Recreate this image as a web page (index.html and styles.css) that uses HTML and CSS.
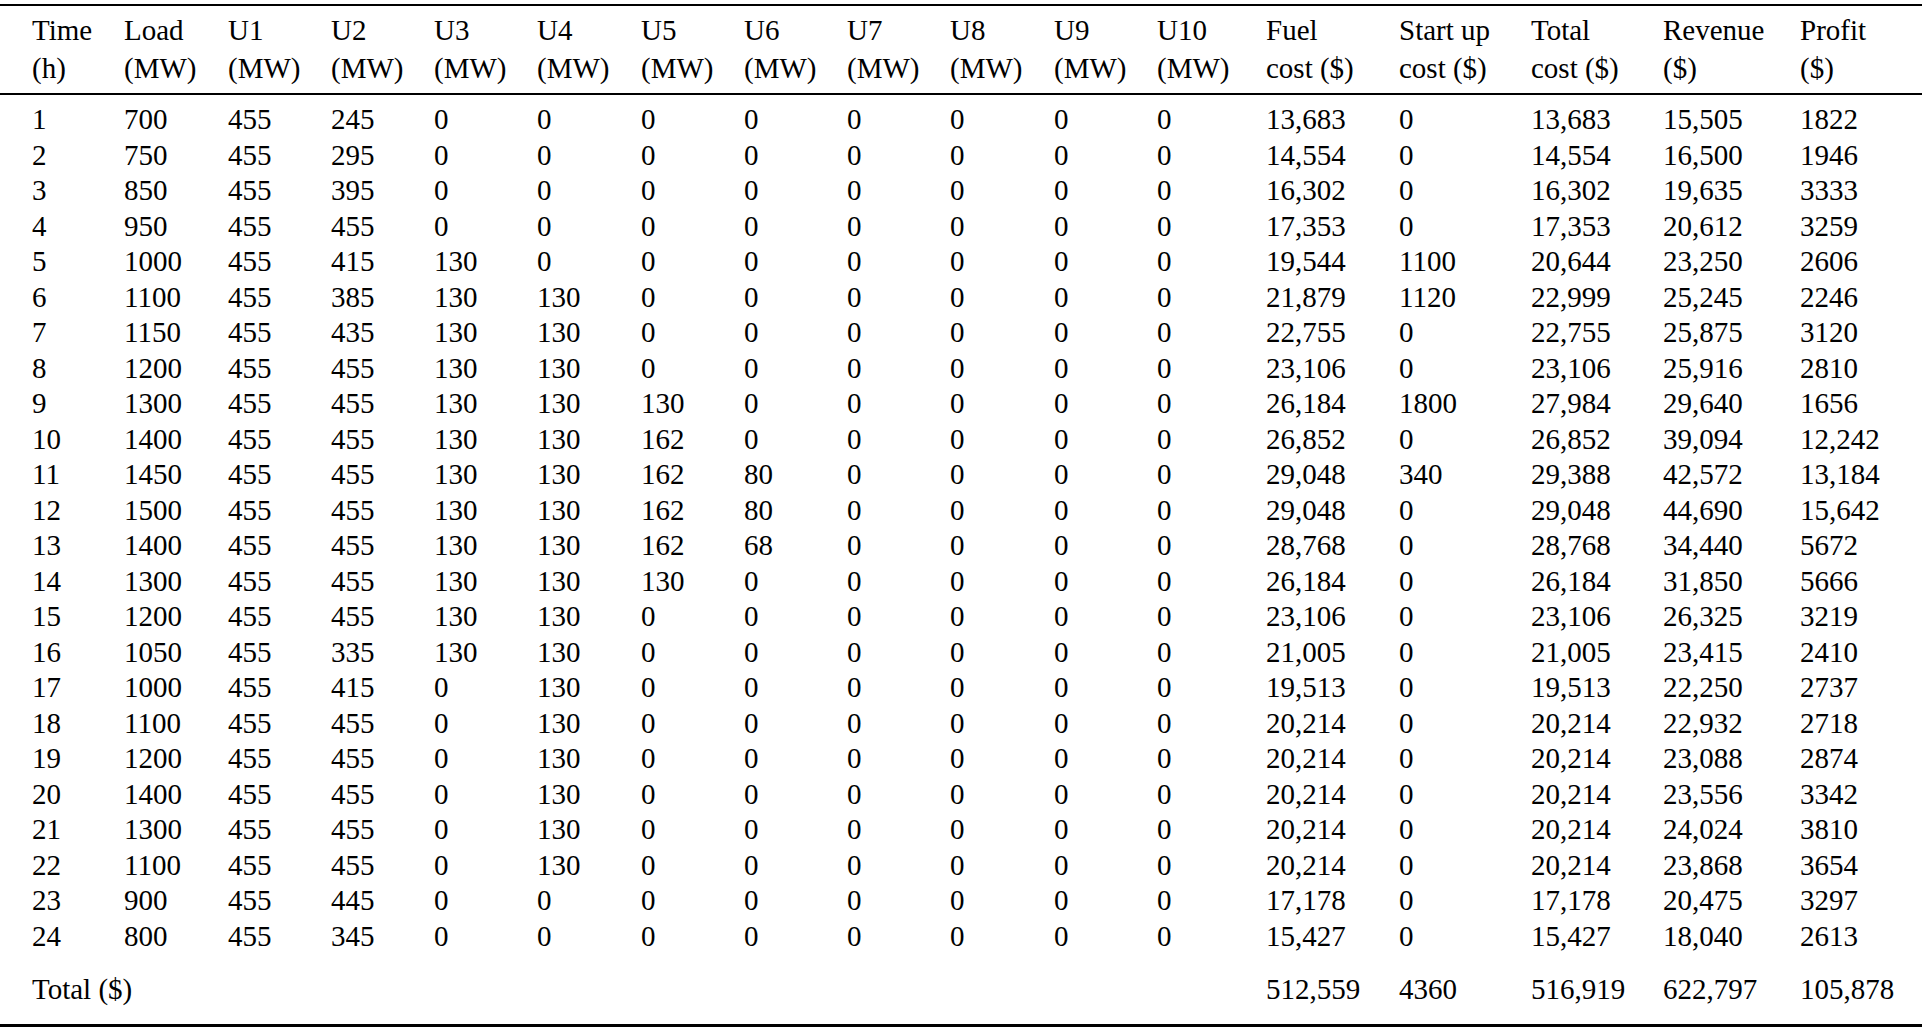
FILE: index.html
```html
<!DOCTYPE html>
<html lang="en">
<head>
<meta charset="utf-8">
<title>Unit commitment results</title>
<link rel="stylesheet" href="styles.css">
</head>
<body>
<div class="results">
  <div class="row head">
    <div class="cell">Time<br>(h)</div>
    <div class="cell">Load<br>(MW)</div>
    <div class="cell">U1<br>(MW)</div>
    <div class="cell">U2<br>(MW)</div>
    <div class="cell">U3<br>(MW)</div>
    <div class="cell">U4<br>(MW)</div>
    <div class="cell">U5<br>(MW)</div>
    <div class="cell">U6<br>(MW)</div>
    <div class="cell">U7<br>(MW)</div>
    <div class="cell">U8<br>(MW)</div>
    <div class="cell">U9<br>(MW)</div>
    <div class="cell">U10<br>(MW)</div>
    <div class="cell">Fuel<br>cost ($)</div>
    <div class="cell">Start up<br>cost ($)</div>
    <div class="cell">Total<br>cost ($)</div>
    <div class="cell">Revenue<br>($)</div>
    <div class="cell">Profit<br>($)</div>
  </div>
  <div class="body">
    <div class="row"><div class="cell">1</div><div class="cell">700</div><div class="cell">455</div><div class="cell">245</div><div class="cell">0</div><div class="cell">0</div><div class="cell">0</div><div class="cell">0</div><div class="cell">0</div><div class="cell">0</div><div class="cell">0</div><div class="cell">0</div><div class="cell">13,683</div><div class="cell">0</div><div class="cell">13,683</div><div class="cell">15,505</div><div class="cell">1822</div></div>
    <div class="row"><div class="cell">2</div><div class="cell">750</div><div class="cell">455</div><div class="cell">295</div><div class="cell">0</div><div class="cell">0</div><div class="cell">0</div><div class="cell">0</div><div class="cell">0</div><div class="cell">0</div><div class="cell">0</div><div class="cell">0</div><div class="cell">14,554</div><div class="cell">0</div><div class="cell">14,554</div><div class="cell">16,500</div><div class="cell">1946</div></div>
    <div class="row"><div class="cell">3</div><div class="cell">850</div><div class="cell">455</div><div class="cell">395</div><div class="cell">0</div><div class="cell">0</div><div class="cell">0</div><div class="cell">0</div><div class="cell">0</div><div class="cell">0</div><div class="cell">0</div><div class="cell">0</div><div class="cell">16,302</div><div class="cell">0</div><div class="cell">16,302</div><div class="cell">19,635</div><div class="cell">3333</div></div>
    <div class="row"><div class="cell">4</div><div class="cell">950</div><div class="cell">455</div><div class="cell">455</div><div class="cell">0</div><div class="cell">0</div><div class="cell">0</div><div class="cell">0</div><div class="cell">0</div><div class="cell">0</div><div class="cell">0</div><div class="cell">0</div><div class="cell">17,353</div><div class="cell">0</div><div class="cell">17,353</div><div class="cell">20,612</div><div class="cell">3259</div></div>
    <div class="row"><div class="cell">5</div><div class="cell">1000</div><div class="cell">455</div><div class="cell">415</div><div class="cell">130</div><div class="cell">0</div><div class="cell">0</div><div class="cell">0</div><div class="cell">0</div><div class="cell">0</div><div class="cell">0</div><div class="cell">0</div><div class="cell">19,544</div><div class="cell">1100</div><div class="cell">20,644</div><div class="cell">23,250</div><div class="cell">2606</div></div>
    <div class="row"><div class="cell">6</div><div class="cell">1100</div><div class="cell">455</div><div class="cell">385</div><div class="cell">130</div><div class="cell">130</div><div class="cell">0</div><div class="cell">0</div><div class="cell">0</div><div class="cell">0</div><div class="cell">0</div><div class="cell">0</div><div class="cell">21,879</div><div class="cell">1120</div><div class="cell">22,999</div><div class="cell">25,245</div><div class="cell">2246</div></div>
    <div class="row"><div class="cell">7</div><div class="cell">1150</div><div class="cell">455</div><div class="cell">435</div><div class="cell">130</div><div class="cell">130</div><div class="cell">0</div><div class="cell">0</div><div class="cell">0</div><div class="cell">0</div><div class="cell">0</div><div class="cell">0</div><div class="cell">22,755</div><div class="cell">0</div><div class="cell">22,755</div><div class="cell">25,875</div><div class="cell">3120</div></div>
    <div class="row"><div class="cell">8</div><div class="cell">1200</div><div class="cell">455</div><div class="cell">455</div><div class="cell">130</div><div class="cell">130</div><div class="cell">0</div><div class="cell">0</div><div class="cell">0</div><div class="cell">0</div><div class="cell">0</div><div class="cell">0</div><div class="cell">23,106</div><div class="cell">0</div><div class="cell">23,106</div><div class="cell">25,916</div><div class="cell">2810</div></div>
    <div class="row"><div class="cell">9</div><div class="cell">1300</div><div class="cell">455</div><div class="cell">455</div><div class="cell">130</div><div class="cell">130</div><div class="cell">130</div><div class="cell">0</div><div class="cell">0</div><div class="cell">0</div><div class="cell">0</div><div class="cell">0</div><div class="cell">26,184</div><div class="cell">1800</div><div class="cell">27,984</div><div class="cell">29,640</div><div class="cell">1656</div></div>
    <div class="row"><div class="cell">10</div><div class="cell">1400</div><div class="cell">455</div><div class="cell">455</div><div class="cell">130</div><div class="cell">130</div><div class="cell">162</div><div class="cell">0</div><div class="cell">0</div><div class="cell">0</div><div class="cell">0</div><div class="cell">0</div><div class="cell">26,852</div><div class="cell">0</div><div class="cell">26,852</div><div class="cell">39,094</div><div class="cell">12,242</div></div>
    <div class="row"><div class="cell">11</div><div class="cell">1450</div><div class="cell">455</div><div class="cell">455</div><div class="cell">130</div><div class="cell">130</div><div class="cell">162</div><div class="cell">80</div><div class="cell">0</div><div class="cell">0</div><div class="cell">0</div><div class="cell">0</div><div class="cell">29,048</div><div class="cell">340</div><div class="cell">29,388</div><div class="cell">42,572</div><div class="cell">13,184</div></div>
    <div class="row"><div class="cell">12</div><div class="cell">1500</div><div class="cell">455</div><div class="cell">455</div><div class="cell">130</div><div class="cell">130</div><div class="cell">162</div><div class="cell">80</div><div class="cell">0</div><div class="cell">0</div><div class="cell">0</div><div class="cell">0</div><div class="cell">29,048</div><div class="cell">0</div><div class="cell">29,048</div><div class="cell">44,690</div><div class="cell">15,642</div></div>
    <div class="row"><div class="cell">13</div><div class="cell">1400</div><div class="cell">455</div><div class="cell">455</div><div class="cell">130</div><div class="cell">130</div><div class="cell">162</div><div class="cell">68</div><div class="cell">0</div><div class="cell">0</div><div class="cell">0</div><div class="cell">0</div><div class="cell">28,768</div><div class="cell">0</div><div class="cell">28,768</div><div class="cell">34,440</div><div class="cell">5672</div></div>
    <div class="row"><div class="cell">14</div><div class="cell">1300</div><div class="cell">455</div><div class="cell">455</div><div class="cell">130</div><div class="cell">130</div><div class="cell">130</div><div class="cell">0</div><div class="cell">0</div><div class="cell">0</div><div class="cell">0</div><div class="cell">0</div><div class="cell">26,184</div><div class="cell">0</div><div class="cell">26,184</div><div class="cell">31,850</div><div class="cell">5666</div></div>
    <div class="row"><div class="cell">15</div><div class="cell">1200</div><div class="cell">455</div><div class="cell">455</div><div class="cell">130</div><div class="cell">130</div><div class="cell">0</div><div class="cell">0</div><div class="cell">0</div><div class="cell">0</div><div class="cell">0</div><div class="cell">0</div><div class="cell">23,106</div><div class="cell">0</div><div class="cell">23,106</div><div class="cell">26,325</div><div class="cell">3219</div></div>
    <div class="row"><div class="cell">16</div><div class="cell">1050</div><div class="cell">455</div><div class="cell">335</div><div class="cell">130</div><div class="cell">130</div><div class="cell">0</div><div class="cell">0</div><div class="cell">0</div><div class="cell">0</div><div class="cell">0</div><div class="cell">0</div><div class="cell">21,005</div><div class="cell">0</div><div class="cell">21,005</div><div class="cell">23,415</div><div class="cell">2410</div></div>
    <div class="row"><div class="cell">17</div><div class="cell">1000</div><div class="cell">455</div><div class="cell">415</div><div class="cell">0</div><div class="cell">130</div><div class="cell">0</div><div class="cell">0</div><div class="cell">0</div><div class="cell">0</div><div class="cell">0</div><div class="cell">0</div><div class="cell">19,513</div><div class="cell">0</div><div class="cell">19,513</div><div class="cell">22,250</div><div class="cell">2737</div></div>
    <div class="row"><div class="cell">18</div><div class="cell">1100</div><div class="cell">455</div><div class="cell">455</div><div class="cell">0</div><div class="cell">130</div><div class="cell">0</div><div class="cell">0</div><div class="cell">0</div><div class="cell">0</div><div class="cell">0</div><div class="cell">0</div><div class="cell">20,214</div><div class="cell">0</div><div class="cell">20,214</div><div class="cell">22,932</div><div class="cell">2718</div></div>
    <div class="row"><div class="cell">19</div><div class="cell">1200</div><div class="cell">455</div><div class="cell">455</div><div class="cell">0</div><div class="cell">130</div><div class="cell">0</div><div class="cell">0</div><div class="cell">0</div><div class="cell">0</div><div class="cell">0</div><div class="cell">0</div><div class="cell">20,214</div><div class="cell">0</div><div class="cell">20,214</div><div class="cell">23,088</div><div class="cell">2874</div></div>
    <div class="row"><div class="cell">20</div><div class="cell">1400</div><div class="cell">455</div><div class="cell">455</div><div class="cell">0</div><div class="cell">130</div><div class="cell">0</div><div class="cell">0</div><div class="cell">0</div><div class="cell">0</div><div class="cell">0</div><div class="cell">0</div><div class="cell">20,214</div><div class="cell">0</div><div class="cell">20,214</div><div class="cell">23,556</div><div class="cell">3342</div></div>
    <div class="row"><div class="cell">21</div><div class="cell">1300</div><div class="cell">455</div><div class="cell">455</div><div class="cell">0</div><div class="cell">130</div><div class="cell">0</div><div class="cell">0</div><div class="cell">0</div><div class="cell">0</div><div class="cell">0</div><div class="cell">0</div><div class="cell">20,214</div><div class="cell">0</div><div class="cell">20,214</div><div class="cell">24,024</div><div class="cell">3810</div></div>
    <div class="row"><div class="cell">22</div><div class="cell">1100</div><div class="cell">455</div><div class="cell">455</div><div class="cell">0</div><div class="cell">130</div><div class="cell">0</div><div class="cell">0</div><div class="cell">0</div><div class="cell">0</div><div class="cell">0</div><div class="cell">0</div><div class="cell">20,214</div><div class="cell">0</div><div class="cell">20,214</div><div class="cell">23,868</div><div class="cell">3654</div></div>
    <div class="row"><div class="cell">23</div><div class="cell">900</div><div class="cell">455</div><div class="cell">445</div><div class="cell">0</div><div class="cell">0</div><div class="cell">0</div><div class="cell">0</div><div class="cell">0</div><div class="cell">0</div><div class="cell">0</div><div class="cell">0</div><div class="cell">17,178</div><div class="cell">0</div><div class="cell">17,178</div><div class="cell">20,475</div><div class="cell">3297</div></div>
    <div class="row"><div class="cell">24</div><div class="cell">800</div><div class="cell">455</div><div class="cell">345</div><div class="cell">0</div><div class="cell">0</div><div class="cell">0</div><div class="cell">0</div><div class="cell">0</div><div class="cell">0</div><div class="cell">0</div><div class="cell">0</div><div class="cell">15,427</div><div class="cell">0</div><div class="cell">15,427</div><div class="cell">18,040</div><div class="cell">2613</div></div>
  </div>
  <div class="row total">
    <div class="cell label">Total ($)</div>
    <div class="cell">512,559</div>
    <div class="cell">4360</div>
    <div class="cell">516,919</div>
    <div class="cell">622,797</div>
    <div class="cell">105,878</div>
  </div>
</div>
</body>
</html>
```

FILE: styles.css
```css
html, body {
  margin: 0;
  padding: 0;
  background: #ffffff;
}

.results {
  width: 1922px;
  margin-top: 4px;
  border-top: 2px solid #000;
  border-bottom: 3px solid #000;
  font-family: "Liberation Serif", "Times New Roman", serif;
  font-size: 29px;
  color: #000;
}

.row {
  display: grid;
  grid-template-columns: 124px 104px 103px 103px 103px 104px 103px 103px 103px 104px 103px 109px 133px 132px 132px 137px 122px;
  line-height: 35.5px;
}

.cell {
  white-space: nowrap;
  text-align: left;
}

.row .cell:first-child {
  padding-left: 32px;
}

.head {
  line-height: 38px;
  padding-top: 5.2px;
  padding-bottom: 5.8px;
  border-bottom: 2px solid #000;
}

.body {
  padding-top: 7.5px;
}

.total {
  padding-top: 18px;
  padding-bottom: 16px;
}

.total .label {
  grid-column: span 12;
}
```
